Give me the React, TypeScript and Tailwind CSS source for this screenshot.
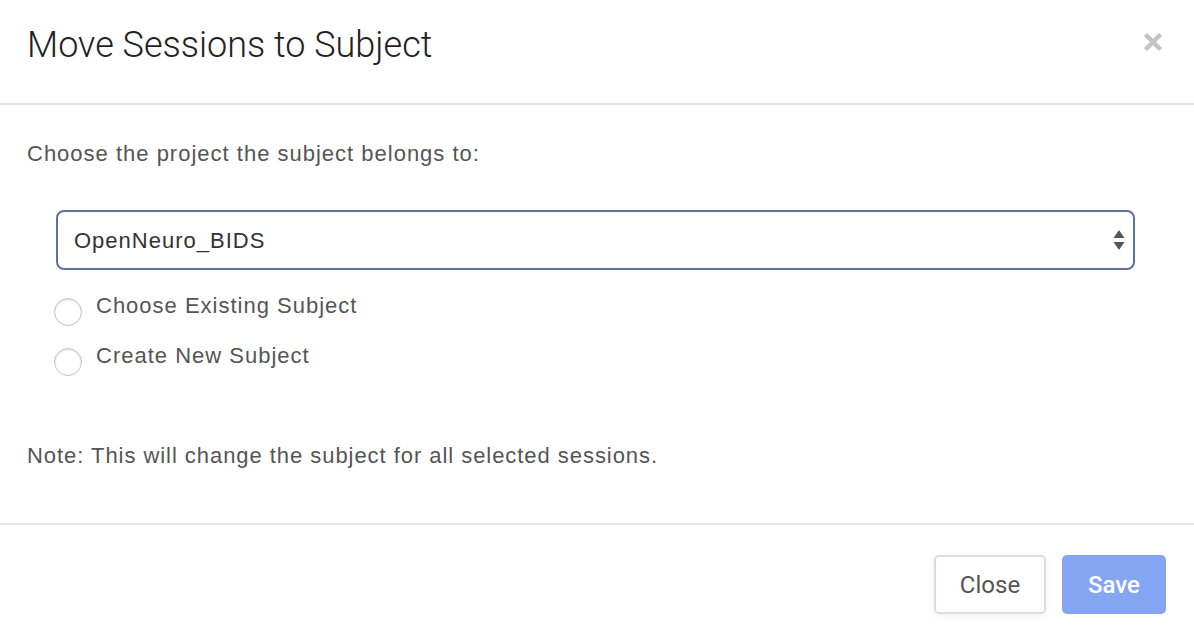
import React from "react";

const body = { fontFamily: '"Liberation Sans", Arial, sans-serif' };
const roboto = { fontFamily: 'Roboto, "Liberation Sans", sans-serif' };

function Radio({ label }: { label: string }) {
  return (
    <label className="flex items-start gap-[14px] h-[50px] cursor-pointer">
      <span className="mt-[5px] w-[28px] h-[28px] rounded-full border border-[#c4c4c4] bg-white shadow-[inset_0_1px_2px_rgba(0,0,0,0.15)] shrink-0" />
      <span className="text-[22px] leading-[26px] tracking-[1px] text-[#555]">{label}</span>
    </label>
  );
}

export default function App() {
  return (
    <div className="w-[1194px] h-[640px] bg-white flex flex-col" style={body}>
      <div className="h-[105px] flex items-start justify-between pl-[27px] pr-[31px] border-b-2 border-[#e5e5e5]">
        <h1 className="pt-[27px] text-[36px] leading-[36px] font-light text-[#222]" style={roboto}>
          Move Sessions to Subject
        </h1>
        <svg className="mt-[32px]" width="20" height="20" viewBox="0 0 20 20">
          <path d="M2.5 2.5 L17.5 17.5 M17.5 2.5 L2.5 17.5" stroke="#c3c3c3" strokeWidth="4.5" />
        </svg>
      </div>

      <div className="h-[418px] pl-[27px] pr-[59px] pt-[36px] flex flex-col">
        <p className="text-[22px] leading-[26px] tracking-[1px] text-[#555]">
          Choose the project the subject belongs to:
        </p>
        <div className="ml-[29px] mt-[43px] h-[60px] border-2 border-[#5a72a4] rounded-[8px] flex items-center justify-between pl-[16px] pr-[8px]">
          <span className="text-[22px] tracking-[1px] text-[#333]">OpenNeuro_BIDS</span>
          <svg width="12" height="22" viewBox="0 0 12 22">
            <path d="M6 1 L11.5 9 L0.5 9 Z" fill="#555" />
            <path d="M0.5 13 L11.5 13 L6 21 Z" fill="#555" />
          </svg>
        </div>
        <div className="ml-[27px] mt-[23px] flex flex-col">
          <Radio label="Choose Existing Subject" />
          <Radio label="Create New Subject" />
        </div>
        <p className="mt-[50px] text-[22px] leading-[26px] tracking-[0.95px] text-[#555]">
          Note: This will change the subject for all selected sessions.
        </p>
      </div>

      <div
        className="flex-1 border-t-2 border-[#e5e5e5] flex items-start justify-end gap-[16px] pt-[30px] pr-[28px]"
        style={roboto}
      >
        <button className="w-[112px] h-[59px] rounded-[5px] border-2 border-[#d7dce6] bg-white text-[24px] text-[#555] shadow-[0_2px_6px_rgba(0,0,0,0.06)]">
          Close
        </button>
        <button className="w-[104px] h-[59px] rounded-[5px] bg-[#84a6f2] text-[24px] font-medium text-white">
          Save
        </button>
      </div>
    </div>
  );
}
